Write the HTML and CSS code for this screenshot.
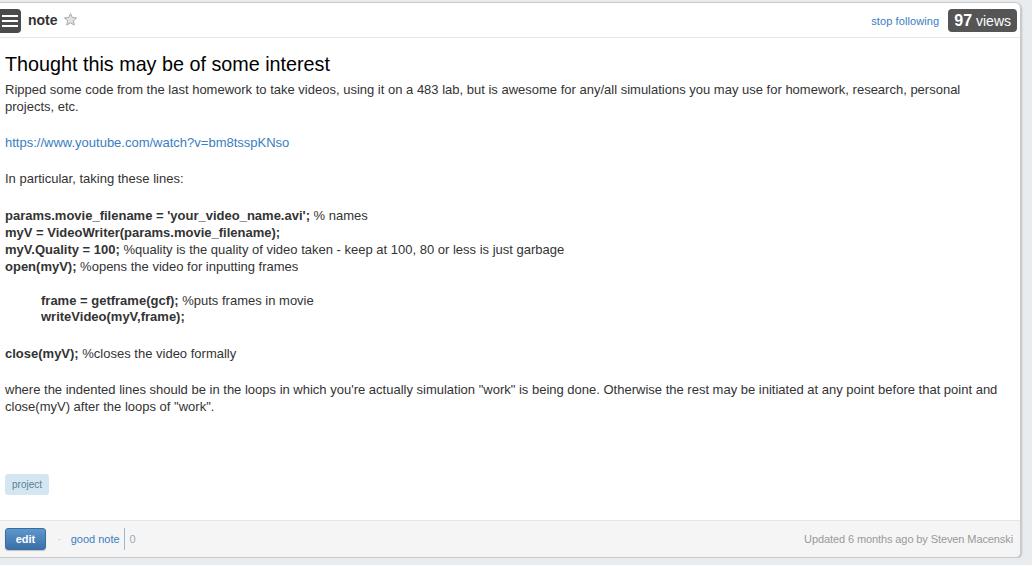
FILE: index.html
```html
<!DOCTYPE html>
<html>
<head>
<meta charset="utf-8">
<link rel="stylesheet" href="styles.css">
</head>
<body>
<div class="card">
  <div class="header">
    <div class="left">
      <div class="menu"><span></span><span></span><span></span></div>
      <span class="type">note</span>
      <svg class="star" width="15" height="15" viewBox="0 0 24 24"><path d="M12 2.5l2.9 6.3 6.8.7-5.1 4.6 1.5 6.8L12 17.4l-6.1 3.5 1.5-6.8-5.1-4.6 6.8-.7z" fill="#e2e2e2" stroke="#a8a8a8" stroke-width="1.6" stroke-linejoin="round"/></svg>
    </div>
    <div class="right">
      <a class="follow">stop following</a>
      <div class="views"><b>97</b> views</div>
    </div>
  </div>
  <div class="content">
    <h1 class="title">Thought this may be of some interest</h1>
    <p>Ripped some code from the last homework to take videos, using it on a 483 lab, but is awesome for any/all simulations you may use for homework, research, personal projects, etc.</p>
    <p class="url"><a class="link">https://www.youtube.com/watch?v=bm8tsspKNso</a></p>
    <p class="intro">In particular, taking these lines:</p>
    <p class="code"><b>params.movie_filename = 'your_video_name.avi';</b> % names<br><b>myV = VideoWriter(params.movie_filename);</b><br><b>myV.Quality = 100;</b> %quality is the quality of video taken - keep at 100, 80 or less is just garbage<br><b>open(myV);</b> %opens the video for inputting frames</p>
    <p class="indent"><b>frame = getframe(gcf);</b> %puts frames in movie<br><b>writeVideo(myV,frame);</b></p>
    <p><b>close(myV);</b> %closes the video formally</p>
    <p>where the indented lines should be in the loops in which you're actually simulation "work" is being done. Otherwise the rest may be initiated at any point before that point and close(myV) after the loops of "work".</p>
    <div class="tags"><span class="tag">project</span></div>
  </div>
  <div class="footer">
    <div class="actions">
      <button class="edit">edit</button>
      <span class="dash">-</span>
      <a class="good">good note</a>
      <span class="count">0</span>
    </div>
    <div class="updated">Updated 6 months ago by Steven Macenski</div>
  </div>
</div>
</body>
</html>
```
FILE: styles.css
```css
html, body {
  margin: 0;
  padding: 0;
  background: #e9ecef;
  font-family: "Liberation Sans", Arial, sans-serif;
}
.card {
  margin-top: 2px;
  margin-left: -1px;
  width: 1022px;
  height: 556px;
  background: #fff;
  border: 1px solid #c9c9c9;
  border-radius: 0 6px 6px 0;
  box-shadow: 1px 1px 2px rgba(0,0,0,0.18);
  display: flex;
  flex-direction: column;
  box-sizing: border-box;
  overflow: hidden;
}
.header {
  height: 34px;
  border-bottom: 1px solid #e6e6e6;
  display: flex;
  align-items: center;
  justify-content: space-between;
  padding-right: 3px;
  flex-shrink: 0;
}
.left {
  display: flex;
  align-items: center;
}
.menu {
  width: 24px;
  height: 24px;
  margin-left: -3px;
  margin-top: 1px;
  background: #4b4b4b;
  border-radius: 4px;
  display: flex;
  flex-direction: column;
  justify-content: center;
  align-items: flex-end;
  gap: 3px;
  padding-right: 3px;
  box-sizing: border-box;
}
.menu span {
  display: block;
  width: 16px;
  height: 2px;
  background: #fff;
}
.type {
  font-weight: bold;
  font-size: 14px;
  color: #333;
  margin-left: 7px;
}
.star {
  margin-left: 5px;
  margin-top: -2px;
}
.right {
  display: flex;
  align-items: center;
}
.follow {
  font-size: 11px;
  color: #3a7dc2;
  margin-right: 9px;
  margin-top: 2px;
  letter-spacing: 0.1px;
}
.views {
  background: #555;
  color: #fff;
  font-size: 14px;
  height: 23px;
  line-height: 23px;
  padding: 0 6px;
  border-radius: 4px;
  margin-top: 1px;
}
.views b {
  font-size: 16px;
}
.content {
  flex: 1;
  padding: 14px 12px 0 5px;
  font-size: 13px;
  line-height: 17px;
  color: #333;
}
.title {
  font-size: 19.75px;
  font-weight: normal;
  line-height: 24px;
  color: #000;
  margin: 0 0 5px;
}
.content p {
  margin: 0 0 19px;
}
.content p.intro {
  margin-bottom: 20px;
}
.content p.code {
  margin-bottom: 18px;
}
.content p.indent {
  padding-left: 36px;
  line-height: 16px;
  margin-bottom: 20px;
}
.link {
  color: #3a7dc2;
}
.tags {
  display: flex;
  margin-top: 59px;
}
.tag {
  display: block;
  background: #d4e7f0;
  color: #5d7f99;
  font-size: 10px;
  line-height: 21px;
  padding: 0 7px;
  border-radius: 3px;
}
.footer {
  height: 36px;
  background: #f5f5f5;
  border-top: 1px solid #e6e6e6;
  display: flex;
  align-items: center;
  justify-content: space-between;
  padding: 0 7px 0 5px;
  flex-shrink: 0;
}
.actions {
  display: flex;
  align-items: center;
  margin-top: -1px;
}
.edit {
  width: 41px;
  height: 22px;
  border: 1px solid #3a6c9f;
  border-radius: 3px;
  background: linear-gradient(#5d97cc, #3b70a8);
  color: #fff;
  font-family: "Liberation Sans", Arial, sans-serif;
  font-weight: bold;
  font-size: 11px;
  padding: 0;
  box-shadow: 0 1px 1px rgba(0,0,0,0.2);
}
.dash {
  color: #bbb;
  font-size: 8px;
  margin-left: 12px;
}
.good {
  color: #3a7dc2;
  font-size: 11px;
  margin-left: 10px;
  padding-right: 4px;
  border-right: 1px solid #9fb6cc;
  line-height: 22px;
}
.count {
  color: #9aaabb;
  font-size: 11px;
  margin-left: 5px;
}
.updated {
  color: #999;
  font-size: 11px;
  letter-spacing: -0.1px;
}
```
